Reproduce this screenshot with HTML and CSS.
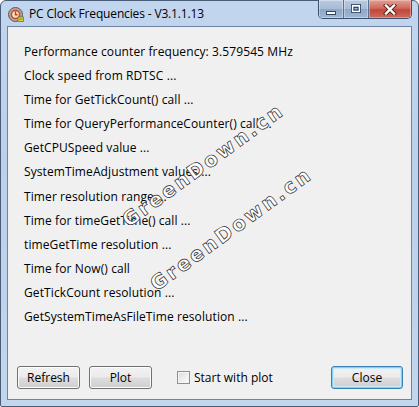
FILE: index.html
```html
<!DOCTYPE html>
<html>
<head>
<meta charset="utf-8">
<link rel="stylesheet" href="styles.css">
</head>
<body>
<div class="window">
  <div class="titlebar">
    <svg class="app-icon" width="16" height="16" viewBox="0 0 16 16">
      <circle cx="7.5" cy="7.5" r="7" fill="#a8a8a8" stroke="#5a5a5a" stroke-width="1"/>
      <circle cx="7.5" cy="7.5" r="5" fill="#e9e4dc"/>
      <circle cx="7.5" cy="7.5" r="4.2" fill="none" stroke="#d24a1c" stroke-width="1.8"/>
      <path d="M7.5 4.5 V7.8 H9.5" fill="none" stroke="#c23a12" stroke-width="1.4"/>
      <rect x="10" y="10" width="5.5" height="4.5" fill="#e8d23a" stroke="#6b7a2a" stroke-width="0.8"/>
      <rect x="11" y="11.5" width="3.5" height="1.5" fill="#7fae3a"/>
    </svg>
    <span class="title">PC Clock Frequencies - V3.1.1.13</span>
    <div class="caption-buttons">
      <div class="cap cap-min">
        <svg width="12" height="6" viewBox="0 0 12 6"><rect x="1.5" y="1.5" width="9" height="3" fill="#fff" stroke="#33455e" stroke-width="1"/></svg>
      </div>
      <div class="cap cap-max">
        <svg width="12" height="10" viewBox="0 0 12 10"><rect x="1.5" y="0.5" width="9" height="8" fill="none" stroke="#33455e" stroke-width="1"/><rect x="2.5" y="1.5" width="7" height="6" fill="none" stroke="#fff" stroke-width="1.2"/><rect x="4" y="3.5" width="4" height="2.5" fill="none" stroke="#33455e" stroke-width="1"/></svg>
      </div>
      <div class="cap cap-close">
        <svg width="14" height="11" viewBox="0 0 14 11"><path d="M3 1.5 L11 9.5 M11 1.5 L3 9.5" stroke="#5a2019" stroke-width="4.2" stroke-linecap="square"/><path d="M3 1.5 L11 9.5 M11 1.5 L3 9.5" stroke="#fff" stroke-width="2.4" stroke-linecap="square"/></svg>
      </div>
    </div>
  </div>
  <div class="client">
    <ul class="lines">
      <li>Performance counter frequency: 3.579545 MHz</li>
      <li>Clock speed from RDTSC ...</li>
      <li>Time for GetTickCount() call ...</li>
      <li>Time for QueryPerformanceCounter() call ...</li>
      <li>GetCPUSpeed value ...</li>
      <li>SystemTimeAdjustment values ...</li>
      <li>Timer resolution range ...</li>
      <li>Time for timeGetTime() call ...</li>
      <li>timeGetTime resolution ...</li>
      <li>Time for Now() call</li>
      <li>GetTickCount resolution ...</li>
      <li>GetSystemTimeAsFileTime resolution ...</li>
    </ul>
    <div class="actions">
      <button class="btn">Refresh</button>
      <button class="btn">Plot</button>
      <label class="check"><span class="box"></span>Start with plot</label>
      <button class="btn btn-default">Close</button>
    </div>
    <span class="watermark wm1">GreenDown.cn</span>
    <span class="watermark wm2">GreenDown.cn</span>
  </div>
</div>
</body>
</html>
```
FILE: styles.css
```css
html, body {
  margin: 0;
  padding: 0;
  background: #ffffff;
}
body {
  font-family: "Open Sans", "Noto Sans", sans-serif;
  font-size: 12px;
  color: #000;
}
.window {
  width: 419px;
  height: 407px;
  box-sizing: border-box;
  border: 1px solid #4a5d78;
  border-radius: 6px 6px 2px 2px;
  background: linear-gradient(180deg, #c1d6ee 0%, #bbd1ea 40%, #c2d6ec 100%);
  display: flex;
  flex-direction: column;
  padding: 0 6px 6px 6px;
}
.titlebar {
  height: 25px;
  display: flex;
  align-items: flex-start;
}
.app-icon {
  margin-top: 6px;
  margin-left: 1px;
  flex: none;
}
.title {
  margin-left: 5px;
  margin-top: 4px;
  line-height: 17px;
  font-family: "Open Sans", "Noto Sans", sans-serif;
  font-size: 12px;
  color: #000;
  letter-spacing: -0.15px;
}
.caption-buttons {
  margin-left: auto;
  margin-top: -1px;
  display: flex;
  height: 18px;
  border: 1px solid #3b506d;
  border-top: none;
  border-radius: 0 0 5px 5px;
  overflow: hidden;
}
.cap {
  height: 18px;
  display: flex;
  align-items: center;
  justify-content: center;
  box-sizing: border-box;
}
.cap-min, .cap-max {
  width: 25px;
  background: linear-gradient(180deg, #b9cbe1 0%, #a7bcd7 48%, #8ea7c7 52%, #a1b7d3 100%);
  border-right: 1px solid #5d7290;
  box-shadow: inset 0 0 0 1px rgba(255,255,255,0.35);
}
.cap-min svg { margin-top: 7px; }
.cap-close {
  width: 42px;
  background: linear-gradient(180deg, #e0a198 0%, #d2685c 45%, #c2473a 55%, #cf6a5b 100%);
  box-shadow: inset 0 0 0 1px rgba(255,220,210,0.4);
}
.client {
  position: relative;
  flex: 1;
  border: 1px solid #6f84a2;
  background: #f0f0f0;
  display: flex;
  flex-direction: column;
  overflow: hidden;
}
.lines {
  list-style: none;
  margin: 0;
  padding: 13px 0 0 16px;
  letter-spacing: 0.1px;
}
.lines li {
  height: 24.1px;
  line-height: 24px;
  white-space: nowrap;
}
.actions {
  margin-top: auto;
  display: flex;
  align-items: center;
  padding: 0 8px 10px 9px;
}
.btn {
  font-family: "Open Sans", "Noto Sans", sans-serif;
  font-size: 12px;
  color: #000;
  height: 23px;
  width: 63px;
  padding: 0;
  border: 1px solid #707070;
  border-radius: 3px;
  background: linear-gradient(180deg, #f2f2f2 0%, #ebebeb 48%, #dddddd 52%, #cfcfcf 100%);
  box-shadow: inset 0 0 0 1px #fcfcfc;
  margin-right: 9px;
}
.check {
  display: flex;
  align-items: center;
  margin-left: 16px;
}
.box {
  width: 11px;
  height: 11px;
  border: 1px solid #8e8f8f;
  background: linear-gradient(135deg, #dcdcdc 0%, #f0f0f0 60%, #fbfbfb 100%);
  box-shadow: inset 0 0 0 1px #f4f4f4;
  margin-right: 4px;
}
.btn-default {
  margin-left: auto;
  margin-right: 0;
  width: 72px;
  border-color: #3c7fb1;
  box-shadow: inset 0 0 0 1px #7ed2f7, inset 0 0 0 2px #c8ecfb;
}
.watermark {
  position: absolute;
  transform: translate(-50%, -50%) rotate(-36deg);
  font-family: "DejaVu Sans", sans-serif;
  font-weight: bold;
  font-size: 20px;
  letter-spacing: 2.5px;
  color: #ffffff;
  -webkit-text-stroke: 0.7px #2a2a2a;
  white-space: nowrap;
  pointer-events: none;
}
.wm1 {
  left: 195px;
  top: 138px;
}
.wm2 {
  left: 223px;
  top: 202px;
}
```
